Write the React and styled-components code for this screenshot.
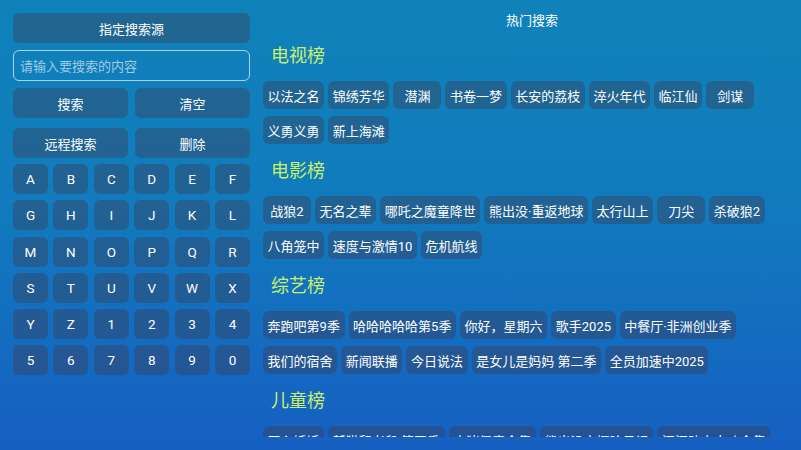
import React from "react";
import styled, { createGlobalStyle } from "styled-components";

const Global = createGlobalStyle`
  html, body { margin: 0; padding: 0; }
  body {
    width: 801px; height: 450px; overflow: hidden;
    font-family: Roboto, "Noto Sans CJK SC", sans-serif;
    background: linear-gradient(180deg, #0f82ba 0%, #117bbd 45%, #165fc2 100%);
    color: #fff;
  }
  * { box-sizing: border-box; }
`;

const Page = styled.div`
  display: flex;
  height: 450px;
  padding: 13px 0 13px 13px;
  gap: 13px;
`;

const Left = styled.div`
  width: 237px;
  flex: none;
  display: flex;
  flex-direction: column;
`;

const Btn = styled.div`
  height: 30px;
  border-radius: 6px;
  background: rgba(60, 60, 82, 0.4);
  display: flex;
  align-items: center;
  justify-content: center;
  font-size: 13px;
  color: #fff;
  flex: ${(p) => (p.$fixed ? "none" : 1)};
`;

const Input = styled.div`
  height: 31px;
  margin-top: 7px;
  border: 1px solid rgba(225, 240, 250, 0.75);
  border-radius: 6px;
  display: flex;
  align-items: center;
  padding-left: 6px;
  font-size: 13px;
  color: rgba(220, 232, 242, 0.72);
`;

const BtnRow = styled.div`
  display: flex;
  gap: 7px;
  margin-top: ${(p) => p.$mt}px;
`;

const Keys = styled.div`
  display: grid;
  grid-template-columns: repeat(6, 1fr);
  gap: 6.3px 5.4px;
  margin-top: 6px;
`;

const Key = styled.div`
  height: 30px;
  border-radius: 6px;
  background: rgba(60, 60, 82, 0.4);
  display: flex;
  align-items: center;
  justify-content: center;
  font-size: 13.5px;
  color: #fff;
`;

const Right = styled.div`
  flex: 1;
  height: 424px;
  overflow: hidden;
  display: flex;
  flex-direction: column;
`;

const Title = styled.div`
  height: 16px;
  line-height: 16px;
  text-align: center;
  font-size: 13px;
  margin-bottom: 12px;
`;

const Section = styled.div`
  margin-bottom: 12px;
`;

const Header = styled.div`
  height: 30px;
  line-height: 30px;
  font-size: 18px;
  color: #c9f06a;
  padding-left: 8px;
  margin-bottom: 10px;
`;

const Tags = styled.div`
  display: flex;
  flex-wrap: wrap;
  gap: 7px 4px;
  padding-right: 20px;
`;

const Tag = styled.div`
  height: 28px;
  min-width: 48px;
  padding: 0 4.6px;
  border-radius: 6px;
  background: rgba(60, 60, 82, 0.4);
  display: flex;
  align-items: center;
  justify-content: center;
  font-size: 13px;
  color: #fff;
  white-space: nowrap;
`;

const keys = "ABCDEFGHIJKLMNOPQRSTUVWXYZ1234567890".split("");

const sections = [
  {
    name: "电视榜",
    items: ["以法之名", "锦绣芳华", "潜渊", "书卷一梦", "长安的荔枝", "淬火年代", "临江仙", "剑谋", "义勇义勇", "新上海滩"],
  },
  {
    name: "电影榜",
    items: ["战狼2", "无名之辈", "哪吒之魔童降世", "熊出没·重返地球", "太行山上", "刀尖", "杀破狼2", "八角笼中", "速度与激情10", "危机航线"],
  },
  {
    name: "综艺榜",
    items: ["奔跑吧第9季", "哈哈哈哈哈第5季", "你好，星期六", "歌手2025", "中餐厅·非洲创业季", "我们的宿舍", "新闻联播", "今日说法", "是女儿是妈妈 第二季", "全员加速中2025"],
  },
  {
    name: "儿童榜",
    items: ["开心锤锤", "新猫和老鼠 第四季", "小猪佩奇全集", "熊出没之探险日记", "汪汪队立大功全集"],
  },
];

export default function App() {
  return (
    <>
      <Global />
      <Page>
        <Left>
          <Btn $fixed>指定搜索源</Btn>
          <Input>请输入要搜索的内容</Input>
          <BtnRow $mt={7}>
            <Btn>搜索</Btn>
            <Btn>清空</Btn>
          </BtnRow>
          <BtnRow $mt={10}>
            <Btn>远程搜索</Btn>
            <Btn>删除</Btn>
          </BtnRow>
          <Keys>
            {keys.map((k) => (
              <Key key={k}>{k}</Key>
            ))}
          </Keys>
        </Left>
        <Right>
          <Title>热门搜索</Title>
          {sections.map((s) => (
            <Section key={s.name}>
              <Header>{s.name}</Header>
              <Tags>
                {s.items.map((t) => (
                  <Tag key={t}>{t}</Tag>
                ))}
              </Tags>
            </Section>
          ))}
        </Right>
      </Page>
    </>
  );
}
